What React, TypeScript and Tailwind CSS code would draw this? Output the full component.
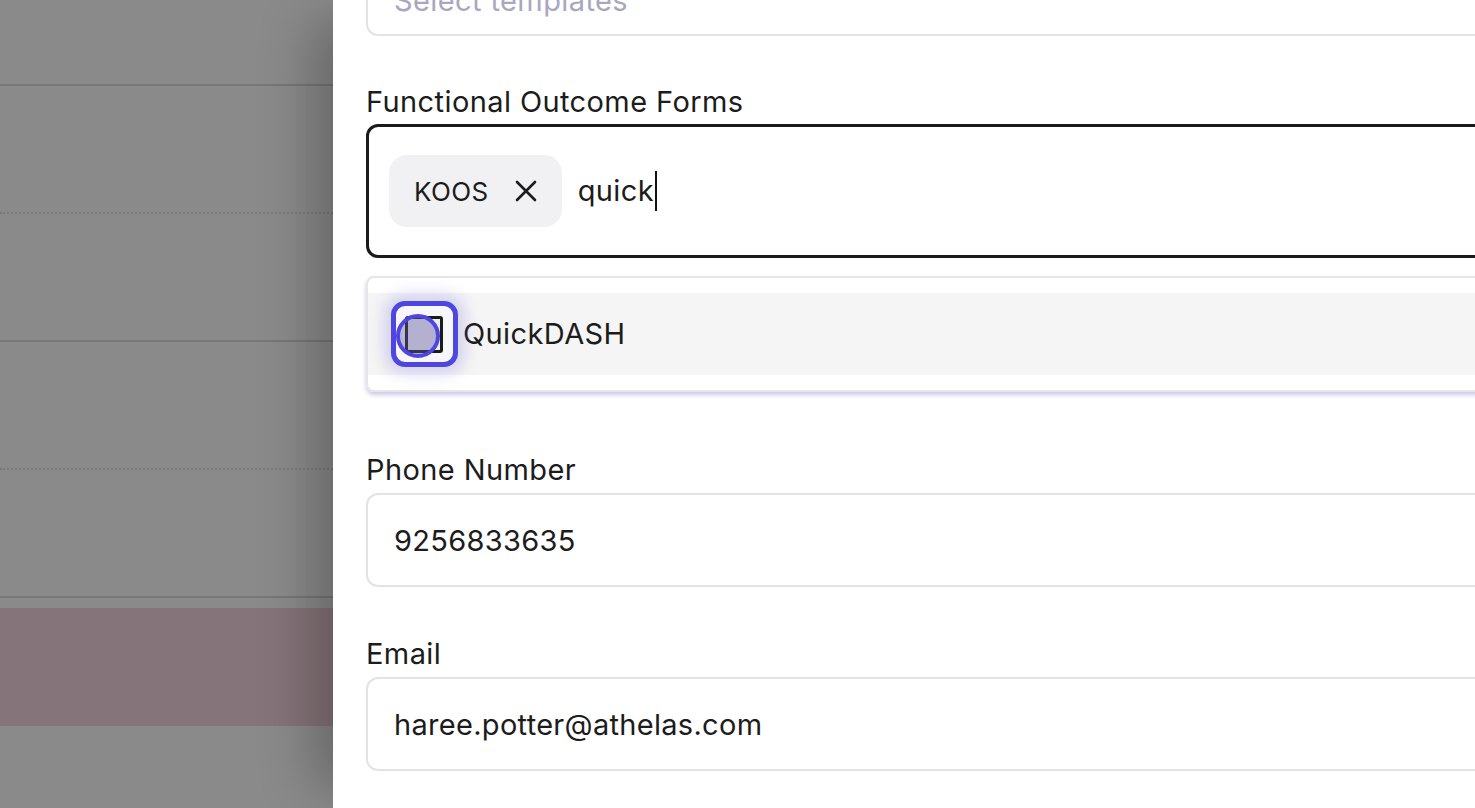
const rows = [
  { h: "h-[86px]", line: "border-b-2 border-[#777777]" },
  { h: "h-[128px]", line: "border-b-2 border-dotted border-[#7a7a7a]" },
  { h: "h-[128px]", line: "border-b-2 border-[#777777]" },
  { h: "h-[128px]", line: "border-b-2 border-dotted border-[#7a7a7a]" },
  { h: "h-[128px]", line: "border-b-2 border-[#777777]" },
];

function Backdrop() {
  return (
    <div className="flex w-[333px] shrink-0 flex-col bg-[#8a8a8a]">
      {rows.map((r, i) => (
        <div key={i} className={`${r.h} ${r.line}`} />
      ))}
      <div className="h-[10px]" />
      <div className="h-[118px] bg-[#857479]" />
    </div>
  );
}

function Field({ label, value }: { label: string; value: string }) {
  return (
    <div className="flex flex-col">
      <label className="mt-[5px] text-[29px] leading-[36px] tracking-[0.4px] text-[#1c1c1c]">{label}</label>
      <div className="mt-[5px] flex h-[94px] items-center rounded-[12px] border-2 border-[#e3e3e3] px-[26px] pt-[2px] text-[29px] tracking-[0.3px] text-[#1c1c1c]">
        {value}
      </div>
    </div>
  );
}

export default function App() {
  return (
    <div className="flex h-[808px] w-[1475px] overflow-hidden bg-white font-['Inter','Liberation_Sans',sans-serif]">
      <Backdrop />
      <div className="relative z-10 flex-1 overflow-hidden bg-white pl-[33px] shadow-[-40px_0_50px_-20px_rgba(0,0,0,0.25)]">
        <div className="mt-[-58px] flex w-[1200px] flex-col">
          {/* templates select, scrolled mostly out of view */}
          <div className="flex h-[94px] items-center rounded-[12px] border-2 border-[#e3e3e3] px-[26px] pt-[24px] text-[29px] tracking-[0.4px] text-[#a9a7c0]">
            Select templates
          </div>

          <div className="mt-[44px] flex flex-col">
            <label className="mt-[4px] text-[29px] leading-[36px] tracking-[0.4px] text-[#1c1c1c]">Functional Outcome Forms</label>
            <div className="mt-[4px] flex h-[134px] items-center gap-4 rounded-[12px] border-[3px] border-[#1a1a1a] px-[20px]">
              <span className="flex h-[72px] items-center gap-[26px] rounded-[18px] bg-[#f1f1f4] pl-[25px] pr-[25px] text-[26px] tracking-[0.4px] text-[#1c1c1c]">
                KOOS
                <svg width="22" height="22" viewBox="0 0 22 22" fill="none" stroke="#1c1c1c" strokeWidth="2.6" strokeLinecap="round">
                  <path d="M2 2L20 20M20 2L2 20" />
                </svg>
              </span>
              <span className="flex items-center text-[29px] tracking-[0.4px] text-[#1c1c1c]">
                quick
                <span className="ml-[1px] h-[40px] w-[2px] bg-[#111]" />
              </span>
            </div>

            {/* options list */}
            <div className="mt-[18px] rounded-[8px] border-2 border-[#e6e6e6] py-[15px] shadow-[0_3px_4px_rgba(110,100,190,0.35)]">
              <div className="flex h-[82px] items-center gap-[5px] bg-[#f5f5f5] pl-[23px]">
                <div className="relative h-[66px] w-[67px] rounded-[14px] border-[5px] border-[#4f46e2] bg-[#f7f7f9] shadow-[0_0_14px_8px_rgba(110,100,220,0.22)]">
                  <div className="absolute left-[9px] top-[10px] h-[37px] w-[38px] rounded-[3px] border-[3px] border-[#1b1b1b] bg-[#ececf0]" />
                  <div className="absolute left-0 top-[8px] h-[44px] w-[44px] rounded-full border-[4px] border-[#4f46e2] bg-[rgba(95,88,160,0.4)]" />
                </div>
                <span className="text-[29px] tracking-[0.4px] text-[#1c1c1c]">QuickDASH</span>
              </div>
            </div>
          </div>

          <div className="mt-[55px]">
            <Field label="Phone Number" value="9256833635" />
          </div>
          <div className="mt-[44px]">
            <Field label="Email" value="haree.potter@athelas.com" />
          </div>
        </div>
      </div>
    </div>
  );
}
